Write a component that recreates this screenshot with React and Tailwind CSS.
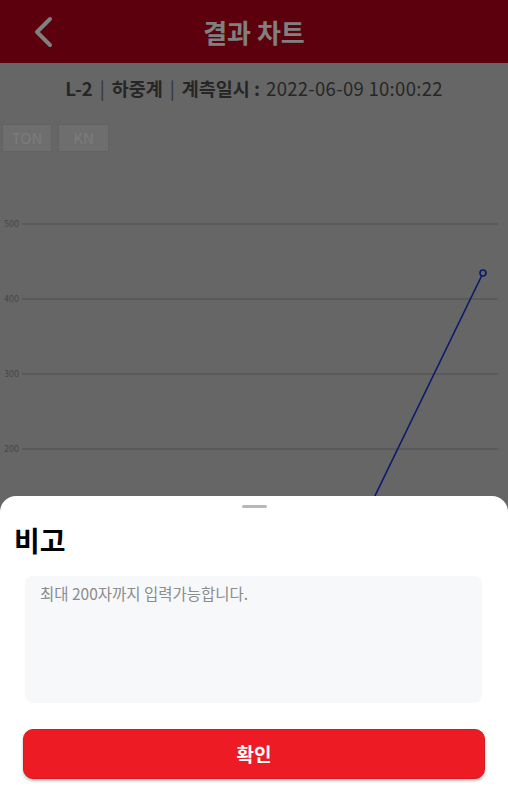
import React from "react";

const font = { fontFamily: '"Noto Sans CJK KR", "Noto Sans", sans-serif' };

export default function App() {
  const grid = [
    { y: 224, v: "500" },
    { y: 299, v: "400" },
    { y: 374, v: "300" },
    { y: 449, v: "200" },
  ];
  return (
    <div className="relative h-[800px] w-[508px] overflow-hidden bg-[#666666]" style={font}>
      <div className="relative flex h-[63px] items-center justify-center bg-[#5c000e]">
        <svg className="absolute left-[30px] top-[16px]" width="26" height="32" viewBox="0 0 26 32">
          <path d="M20 3 L7 16 L20 29" fill="none" stroke="#808080" strokeWidth="4" strokeLinecap="round" strokeLinejoin="round" />
        </svg>
        <span className="text-[26px] font-bold text-[#808080]">결과 차트</span>
      </div>
      <div className="flex h-[52px] items-center justify-center text-[18.5px] text-[#262626]">
        <span className="font-bold">L-2</span>
        <span className="mx-[7px] text-[#333]">|</span>
        <span className="font-bold">하중계</span>
        <span className="mx-[7px] text-[#333]">|</span>
        <span className="font-bold">계측일시 :</span>
        <span className="ml-[6px] tracking-[0.3px]">2022-06-09 10:00:22</span>
      </div>
      <div className="ml-[2px] mt-[9px] flex gap-[6px]">
        <div className="flex h-[28px] w-[50px] items-center justify-center border border-[#626262] bg-[#6e6e6e] text-[15px] text-[#7c7c7c]">TON</div>
        <div className="flex h-[28px] w-[51px] items-center justify-center border border-[#626262] bg-[#6e6e6e] text-[15px] text-[#7c7c7c]">KN</div>
      </div>
      <svg className="block" width="508" height="648" viewBox="0 152 508 648">
        {grid.map((g) => (
          <g key={g.v}>
            <line x1="22" y1={g.y} x2="498" y2={g.y} stroke="#4e4e4e" strokeWidth="1" />
            <text x="4" y={g.y + 3} fontSize="9" fill="#474747" style={font}>{g.v}</text>
          </g>
        ))}
        <line x1="22" y1="524" x2="498" y2="524" stroke="#4e4e4e" strokeWidth="1" />
        <line x1="483" y1="273" x2="323" y2="603" stroke="#0b1a6c" strokeWidth="1.6" />
        <circle cx="483" cy="273" r="3" fill="#666666" stroke="#0b1a6c" strokeWidth="1.6" />
      </svg>
      <div className="absolute bottom-0 left-0 right-0 h-[304px] rounded-t-[16px] bg-white pt-[9px]">
        <div className="mx-auto h-[3px] w-[25px] rounded-full bg-[#b8b8b8]" />
        <div className="ml-[14px] mt-[12px] flex h-[40px] items-center text-[28px] font-bold text-black">비고</div>
        <textarea
          className="ml-[25px] mt-[16px] block h-[127px] w-[457px] resize-none rounded-[8px] bg-[#f7f8fa] px-[15px] pt-[6px] text-[15.5px] leading-[22px] text-[#333] outline-none placeholder:text-[#8c8c8c]"
          placeholder="최대 200자까지 입력가능합니다."
          style={font}
        />
        <button className="ml-[23px] mt-[26px] flex h-[50px] w-[462px] items-center justify-center rounded-[10px] border border-[#d81a22] bg-[#ed1c24] text-[19px] font-bold text-white shadow-[0_2px_3px_rgba(0,0,0,0.25)]" style={font}>
          확인
        </button>
      </div>
    </div>
  );
}
